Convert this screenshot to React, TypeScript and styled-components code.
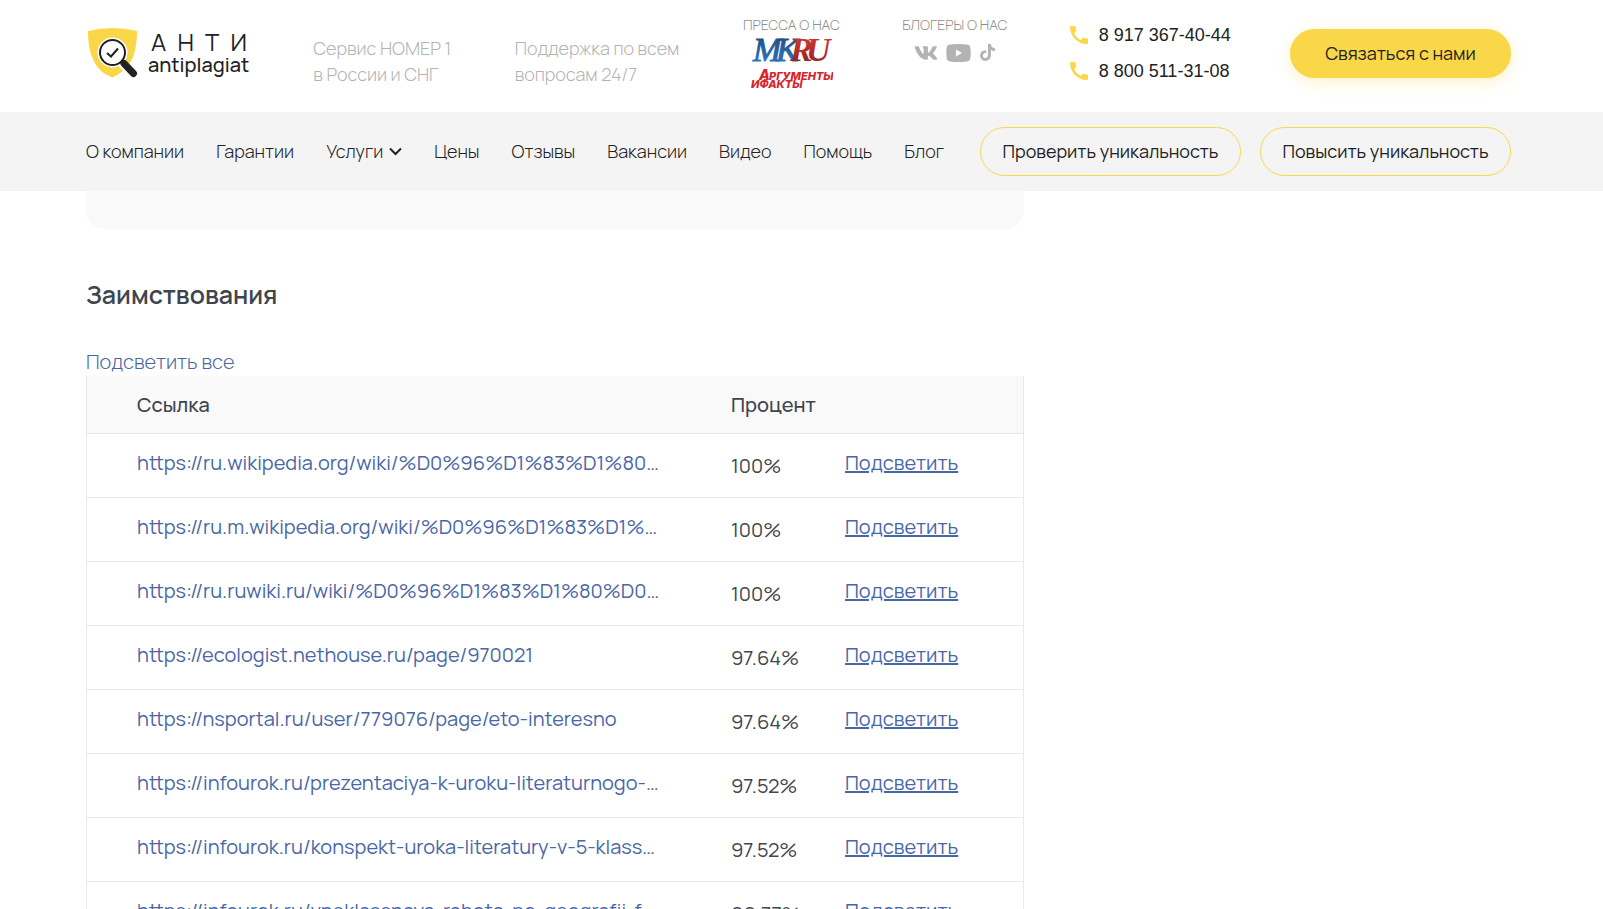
import React from "react";
import styled, { createGlobalStyle } from "styled-components";
import { FaTiktok, FaVk } from "react-icons/fa";
import { MdCall } from "react-icons/md";

const GlobalStyle = createGlobalStyle`
  *, *::before, *::after { box-sizing: border-box; }
  body {
    margin: 0;
    background: #fff;
    color: #222;
    font-family: Manrope, Inter, "Noto Sans", sans-serif;
    font-size: 20px;
  }
  a { color: inherit; text-decoration: none; }
`;

const Page = styled.div`
  display: flex;
  flex-direction: column;
  height: 100vh;
  overflow: hidden;
`;

const Header = styled.header`
  flex: none;
`;

const TopBar = styled.div`
  display: flex;
  justify-content: space-between;
  height: 112px;
  padding: 0 92px 0 86px;
`;

const Logo = styled.a`
  display: flex;
  gap: 10px;
  width: 165px;
  padding-top: 28px;
`;

const LogoName = styled.span`
  display: flex;
  flex-direction: column;
  flex: 1;
  white-space: nowrap;
`;

const LogoTitle = styled.span`
  display: flex;
  justify-content: space-between;
  padding: 0 4px 0 3px;
  font-size: 24px;
  line-height: 28px;
`;

const LogoSubtitle = styled.span`
  font-size: 20px;
  font-weight: 500;
  line-height: 18px;
`;

const Tagline = styled.p<{ $width: number }>`
  width: ${(p) => p.$width}px;
  margin: 0;
  padding-top: 35px;
  color: #b3b3b3;
  font-size: 18px;
  font-weight: 300;
  line-height: 26px;
  white-space: nowrap;
`;

const Mentions = styled.div<{ $width: number }>`
  display: flex;
  flex-direction: column;
  align-items: center;
  width: ${(p) => p.$width}px;
  padding-top: 16px;
`;

const MentionsTitle = styled.span`
  color: #8f8f8f;
  font-size: 14px;
  font-weight: 300;
  line-height: 18px;
  white-space: nowrap;
`;

const PressLogos = styled.svg`
  display: block;
  width: 84px;
  height: 56px;
`;

const Socials = styled.div`
  display: flex;
  align-items: center;
  gap: 8px;
  height: 37px;
  color: #b3b3b3;
`;

const SocialLink = styled.a`
  display: flex;
`;

const Phones = styled.address`
  display: flex;
  flex-direction: column;
  gap: 12px;
  width: 158px;
  padding-top: 23px;
  font-style: normal;
`;

const PhoneLink = styled.a`
  display: flex;
  align-items: center;
  gap: 8px;
  font-family: "Liberation Sans", Arial, sans-serif;
  font-size: 18px;
  line-height: 24px;
  white-space: nowrap;

  svg { flex: none; margin-left: -3px; color: #fad749; }
`;

const ContactButton = styled.button`
  width: 221px;
  height: 49px;
  margin-top: 29px;
  padding: 0 0 2px;
  border: 0;
  border-radius: 25px;
  background: #fad749;
  box-shadow: 0 4px 16px rgba(250, 215, 73, 0.3);
  color: #222;
  font: inherit;
  font-size: 18px;
  white-space: nowrap;
`;

const NavBar = styled.nav`
  display: flex;
  align-items: center;
  justify-content: space-between;
  height: 79px;
  padding: 0 92px 0 86px;
  background: #f4f4f4;
`;

const Menu = styled.ul`
  display: flex;
  justify-content: space-between;
  flex: 1;
  margin: 0;
  padding: 0 0 2px;
  list-style: none;
`;

const MenuLink = styled.a`
  display: flex;
  align-items: center;
  gap: 6px;
  font-size: 18px;
  font-weight: 300;
  line-height: 24px;
  white-space: nowrap;

  svg { margin-top: 2px; }
`;

const Actions = styled.div`
  display: flex;
  gap: 19px;
  margin-left: 36px;
`;

const OutlineButton = styled.button<{ $width: number }>`
  width: ${(p) => p.$width}px;
  height: 49px;
  padding: 0 0 2px;
  border: 1px solid #fad749;
  border-radius: 25px;
  background: transparent;
  color: #222;
  font: inherit;
  font-size: 18px;
  white-space: nowrap;
`;

const Content = styled.main`
  width: 64%;
  max-width: 1024px;
  padding-left: 86px;
`;

const ReportCard = styled.div`
  height: 38px;
  border-radius: 0 0 19px 19px;
  background: #f9f9f9;
`;

const Heading = styled.h2`
  margin: 50px 0 0;
  color: #40454d;
  font-size: 25px;
  font-weight: 600;
  line-height: 32px;
`;

const HighlightAll = styled.a`
  display: block;
  width: max-content;
  margin-top: 37px;
  color: #4a67a5;
  font-weight: 300;
  line-height: 28px;
`;

const Table = styled.table`
  width: 100%;
  table-layout: fixed;
  border-collapse: separate;
  border-spacing: 0;
  border: 1px solid #e9e9e9;
  border-top: 0;
`;

const HeadCell = styled.th<{ $width?: number }>`
  width: ${(p) => (p.$width ? `${p.$width}px` : "auto")};
  height: 58px;
  padding: 0;
  border-bottom: 1px solid #e5e5e5;
  background: #f9f9f9;
  color: #40454d;
  font-weight: 500;
  text-align: left;

  &:first-child { padding-left: 50px; }
`;

const Cell = styled.td`
  height: 64px;
  padding: 15px 0 0;
  border-bottom: 1px solid #e9e9e9;
  line-height: 28px;
  vertical-align: top;
  white-space: nowrap;

  &:first-child { padding-left: 50px; }
`;

const PercentCell = styled(Cell)`
  padding-top: 18px;
  color: #40454d;
`;

const SourceLink = styled.a`
  color: #4a67a5;
`;

const HighlightLink = styled.a`
  color: #4a67a5;
  text-decoration: underline;
  text-decoration-thickness: 2px;
`;

const menu = ["О компании", "Гарантии", "Услуги", "Цены", "Отзывы", "Вакансии", "Видео", "Помощь", "Блог"];

const sources: [string, string][] = [
  ["https://ru.wikipedia.org/wiki/%D0%96%D1%83%D1%80…", "100%"],
  ["https://ru.m.wikipedia.org/wiki/%D0%96%D1%83%D1%…", "100%"],
  ["https://ru.ruwiki.ru/wiki/%D0%96%D1%83%D1%80%D0…", "100%"],
  ["https://ecologist.nethouse.ru/page/970021", "97.64%"],
  ["https://nsportal.ru/user/779076/page/eto-interesno", "97.64%"],
  ["https://infourok.ru/prezentaciya-k-uroku-literaturnogo-…", "97.52%"],
  ["https://infourok.ru/konspekt-uroka-literatury-v-5-klass…", "97.52%"],
  ["https://infourok.ru/vneklassnaya-rabota-po-geografii-f…", "96.77%"],
];

const ShieldIcon = () => (
  <svg width="52" height="50" viewBox="0 0 52 50" aria-hidden="true">
    <path d="M2 3Q26-3 51 3C51 24 46 41 27 49Q26 50 25 49C8 42 2 25 2 3Z" fill="#fad749" />
    <path d="M34 33L46 46" stroke="#fff" strokeWidth="9" />
    <circle cx="26.500" cy="24.500" r="15" fill="#fff" />
    <circle cx="26.500" cy="24.500" r="12.500" fill="#fff" stroke="#222" strokeWidth="2" />
    <path d="M21 25L25 28.500L32 20.500" fill="none" stroke="#222" strokeWidth="2" />
    <path d="M35 33L38 36" stroke="#222" strokeWidth="4" />
    <path d="M38 35.500L47.500 45.500" stroke="#222" strokeWidth="7" strokeLinecap="round" />
  </svg>
);

const PressIcon = () => (
  <PressLogos viewBox="0 0 84 56" role="img" aria-label="MKRU, Аргументы и Факты">
    <defs>
      <linearGradient id="blue" x1="0" y1="0" x2="0" y2="1">
        <stop offset="0" stopColor="#1c4778" />
        <stop offset="1" stopColor="#2f7cc8" />
      </linearGradient>
      <linearGradient id="red" x1="0" y1="0" x2="0" y2="1">
        <stop offset="0" stopColor="#e23b34" />
        <stop offset="1" stopColor="#8e1f22" />
      </linearGradient>
    </defs>
    <text y="27" fontFamily="Liberation Serif, serif" fontStyle="italic" fontSize="34">
      <tspan x="4" fill="url(#blue)" stroke="url(#blue)">M</tspan>
      <tspan x="27" fill="url(#blue)" stroke="url(#blue)">K</tspan>
      <tspan x="41" fill="url(#red)" fontWeight="700">R</tspan>
      <tspan x="57" fill="url(#red)" fontWeight="700">U</tspan>
    </text>
    <g fill="#d9222a" fontFamily="Inter, sans-serif" fontStyle="italic" fontWeight="800">
      <text x="10" y="46">
        <tspan fontSize="14">А</tspan>
        <tspan x="20" fontSize="11">РГУМЕНТЫ</tspan>
      </text>
      <text x="2" y="54" fontSize="11">ИФАКТЫ</text>
    </g>
  </PressLogos>
);

const YoutubeIcon = () => (
  <svg width="25" height="18" viewBox="0 0 25 18" aria-hidden="true">
    <path d="M4 .6Q12.500-.5 21 .6Q24 1 24.400 4Q25 9 24.400 14Q24 17 21 17.400Q12.500 18.500 4 17.400Q1 17 .6 14Q0 9 .6 4Q1 1 4 .6Z" fill="currentColor" />
    <path d="M10 5.500V12.500L16 9Z" fill="#fff" />
  </svg>
);

const ChevronIcon = () => (
  <svg width="13" height="9" viewBox="0 0 13 9" aria-hidden="true">
    <path d="M1 1.500L6.500 7L12 1.500" fill="none" stroke="#222" strokeWidth="2" />
  </svg>
);

export default function App() {
  return (
    <Page>
      <GlobalStyle />
      <Header>
        <TopBar>
          <Logo href="#">
            <ShieldIcon />
            <LogoName>
              <LogoTitle>
                <span>А</span>
                <span>Н</span>
                <span>Т</span>
                <span>И</span>
              </LogoTitle>
              <LogoSubtitle>antiplagiat</LogoSubtitle>
            </LogoName>
          </Logo>
          <Tagline $width={139}>
            Сервис НОМЕР 1
            <br />в России и СНГ
          </Tagline>
          <Tagline $width={166}>
            Поддержка по всем
            <br />
            вопросам 24/7
          </Tagline>
          <Mentions $width={97}>
            <MentionsTitle>ПРЕССА О НАС</MentionsTitle>
            <PressIcon />
          </Mentions>
          <Mentions $width={105}>
            <MentionsTitle>БЛОГЕРЫ О НАС</MentionsTitle>
            <Socials>
              <SocialLink href="#" aria-label="ВКонтакте"><FaVk size={24} /></SocialLink>
              <SocialLink href="#" aria-label="YouTube"><YoutubeIcon /></SocialLink>
              <SocialLink href="#" aria-label="TikTok"><FaTiktok size={17} /></SocialLink>
            </Socials>
          </Mentions>
          <Phones>
            <PhoneLink href="tel:89173674044"><MdCall size={24} />8 917 367-40-44</PhoneLink>
            <PhoneLink href="tel:88005113108"><MdCall size={24} />8 800 511-31-08</PhoneLink>
          </Phones>
          <ContactButton type="button">Связаться с нами</ContactButton>
        </TopBar>
        <NavBar>
          <Menu>
            {menu.map((item) => (
              <li key={item}>
                <MenuLink href="#">
                  {item}
                  {item === "Услуги" && <ChevronIcon />}
                </MenuLink>
              </li>
            ))}
          </Menu>
          <Actions>
            <OutlineButton type="button" $width={261}>Проверить уникальность</OutlineButton>
            <OutlineButton type="button" $width={251}>Повысить уникальность</OutlineButton>
          </Actions>
        </NavBar>
      </Header>
      <Content>
        <ReportCard />
        <Heading>Заимствования</Heading>
        <HighlightAll href="#">Подсветить все</HighlightAll>
        <Table>
          <thead>
            <tr>
              <HeadCell scope="col">Ссылка</HeadCell>
              <HeadCell scope="col" $width={114}>Процент</HeadCell>
              <HeadCell scope="col" $width={178} aria-label="Действие" />
            </tr>
          </thead>
          <tbody>
            {sources.map(([url, percent]) => (
              <tr key={url}>
                <Cell><SourceLink href="#">{url}</SourceLink></Cell>
                <PercentCell>{percent}</PercentCell>
                <Cell><HighlightLink href="#">Подсветить</HighlightLink></Cell>
              </tr>
            ))}
          </tbody>
        </Table>
      </Content>
    </Page>
  );
}
